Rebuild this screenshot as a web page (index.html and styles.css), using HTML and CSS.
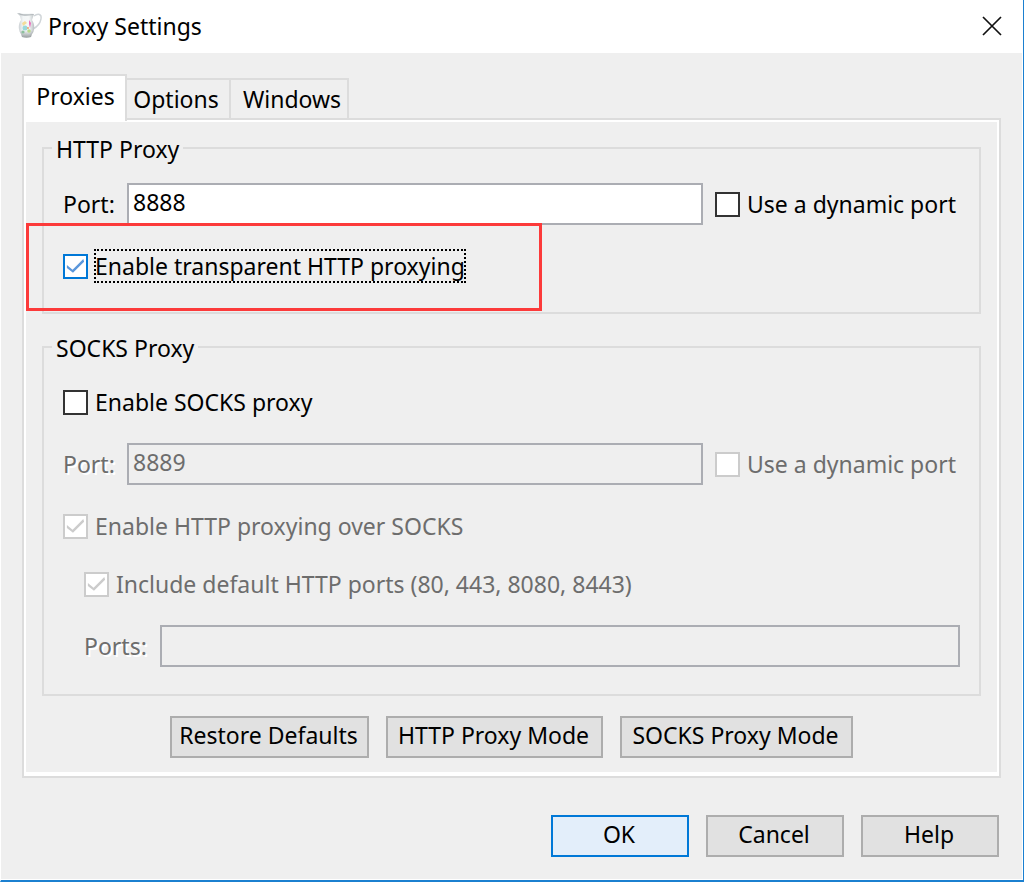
FILE: index.html
```html
<!DOCTYPE html>
<html lang="en">
<head>
<meta charset="utf-8">
<title>Proxy Settings</title>
<link rel="stylesheet" href="styles.css">
</head>
<body>
<div class="window">
  <header class="titlebar">
    <svg class="app-icon" width="28" height="30" viewBox="0 0 28 30" aria-hidden="true">
      <defs>
        <linearGradient id="glaze" x1="0" x2="1" y1="0" y2="0">
          <stop offset="0" stop-color="#bcc2c6"/>
          <stop offset="0.35" stop-color="#f3f6f7"/>
          <stop offset="0.7" stop-color="#f6f8f8"/>
          <stop offset="1" stop-color="#b9bfc2"/>
        </linearGradient>
        <linearGradient id="shade" x1="0" x2="0" y1="0" y2="1">
          <stop offset="0.7" stop-color="#7e8587" stop-opacity="0"/>
          <stop offset="1" stop-color="#7e8587" stop-opacity="0.8"/>
        </linearGradient>
      </defs>
      <path d="M18 5c4-3 8-2 7 3-1 5-4 8-8 10" fill="none" stroke="#d0d5d8" stroke-width="1.4"/>
      <path id="jug" d="M1 2c5 1 11 0 17 1l-2 6c3 4 3 11 0 14l-1 3c-3 1-6 1-9 0l-1-3C2 19 2 13 5 9L4 5z" fill="url(#glaze)"/>
      <path d="M1 2c5 1 11 0 17 1l-2 6c3 4 3 11 0 14l-1 3c-3 1-6 1-9 0l-1-3C2 19 2 13 5 9L4 5z" fill="url(#shade)"/>
      <path d="M2 2c5 2 11 1 16 1l-1 1C12 5 7 5 4 4z" fill="#b4babd"/>
      <path d="M6 12l3-2 2 2-4 3z" fill="#f3dc9a"/>
      <path d="M13 9l2 3-1 5-1-4z" fill="#ea6fbd"/>
      <circle cx="9" cy="17" r="2.5" fill="#9bd9dc"/>
      <circle cx="13" cy="20" r="1.8" fill="#b9d98a"/>
      <circle cx="7" cy="21" r="1.6" fill="#8cc09e"/>
      <circle cx="12" cy="17" r="0.9" fill="#ee9a62"/>
    </svg>
    <h1 class="title">Proxy Settings</h1>
    <button class="close" type="button" aria-label="Close">
      <svg width="20" height="20" viewBox="0 0 20 20" aria-hidden="true"><path d="M1 1l18 18M19 1L1 19" stroke="#111" stroke-width="1.7" fill="none"/></svg>
    </button>
  </header>

  <main class="content">
    <div class="tabs" role="tablist">
      <button class="tab tab-selected" type="button" role="tab" aria-selected="true">Proxies</button>
      <button class="tab tab-options" type="button" role="tab" aria-selected="false">Options</button>
      <button class="tab tab-windows" type="button" role="tab" aria-selected="false">Windows</button>
    </div>

    <form class="panel" id="settings">
      <fieldset class="group">
        <legend>HTTP Proxy</legend>
        <div class="row">
          <label class="field-label" for="http-port">Port:</label>
          <input class="field" id="http-port" type="text" value="8888">
          <label class="check dynamic"><input type="checkbox"><span>Use a dynamic port</span></label>
        </div>
        <div class="row highlighted">
          <label class="check"><input class="active" type="checkbox" checked><span class="focused">Enable transparent HTTP proxying</span></label>
          <div class="highlight"></div>
        </div>
      </fieldset>

      <fieldset class="group socks">
        <legend>SOCKS Proxy</legend>
        <div class="row">
          <label class="check"><input type="checkbox"><span>Enable SOCKS proxy</span></label>
        </div>
        <div class="row disabled">
          <label class="field-label" for="socks-port">Port:</label>
          <input class="field" id="socks-port" type="text" value="8889" disabled>
          <label class="check dynamic"><input type="checkbox" disabled><span>Use a dynamic port</span></label>
        </div>
        <div class="row disabled">
          <label class="check"><input type="checkbox" checked disabled><span>Enable HTTP proxying over SOCKS</span></label>
        </div>
        <div class="row disabled indented">
          <label class="check"><input type="checkbox" checked disabled><span>Include default HTTP ports (80, 443, 8080, 8443)</span></label>
        </div>
        <div class="row disabled indented">
          <label class="field-label wide" for="ports">Ports:</label>
          <input class="field" id="ports" type="text" disabled>
        </div>
      </fieldset>

      <div class="modes">
        <button class="button mode-restore" type="button">Restore Defaults</button>
        <button class="button mode-http" type="button">HTTP Proxy Mode</button>
        <button class="button mode-socks" type="button">SOCKS Proxy Mode</button>
      </div>
    </form>

    <footer class="actions">
      <button class="button action primary" type="submit" form="settings">OK</button>
      <button class="button action" type="button">Cancel</button>
      <button class="button action" type="button">Help</button>
    </footer>
  </main>
</div>
</body>
</html>
```
FILE: styles.css
```css
* {
  box-sizing: border-box;
}

body {
  margin: 0;
  background: #fff;
  color: #000;
  font: 23px/32px "Noto Sans", "Open Sans", sans-serif;
}

button,
input {
  margin: 0;
  color: inherit;
  font: inherit;
}

.window {
  display: flex;
  flex-direction: column;
  min-height: 100vh;
  border-left: 1px solid #fff;
  border-right: 1px solid #1b80d0;
  border-bottom: 2px solid #1b80d0;
}

.titlebar {
  display: flex;
  align-items: center;
  height: 53px;
  padding: 0 20px 2px 15px;
}

.app-icon {
  flex: none;
}

.title {
  flex: 1;
  margin: 0 0 0 4px;
  font-size: 23px;
  font-weight: 400;
}

.close {
  display: flex;
  padding: 1px;
  border: 0;
  background: none;
}

.content {
  flex: 1;
  margin: 0 1px 1px 0;
  padding: 21px 21px 20px;
  background: #efefef;
}

.tabs {
  display: flex;
  align-items: flex-end;
  height: 44px;
}

.tab {
  height: 40px;
  padding: 0;
  border: 2px solid #dcdcdc;
  border-left: 0;
  border-bottom: 0;
  background: #efefef;
}

.tab-selected {
  z-index: 1;
  width: 105px;
  height: 47px;
  margin-bottom: -3px;
  padding: 0 0 6px 2px;
  border-left: 2px solid #dcdcdc;
  background: #fff;
}

.tab-options {
  width: 104px;
  padding-right: 4px;
}

.tab-windows {
  width: 118px;
  padding-left: 6px;
}

.panel {
  padding: 11px 18px 18px;
  border: 2px solid #dcdcdc;
  box-shadow: inset 0 0 0 2px #fff, inset 0 -4px #fff;
}

.group {
  min-width: 0;
  margin: 0;
  padding: 18px 19px 29px;
  border: 2px solid #dcdcdc;
}

.socks {
  margin-top: 16px;
  padding: 21px 19px 27px;
}

legend {
  margin-left: -11px;
  padding: 2px 4px 0;
}

.row {
  display: flex;
  align-items: center;
  min-height: 34px;
}

.row + .row {
  margin-top: 24px;
}

.indented {
  padding-left: 21px;
}

.disabled {
  color: #6d6d6d;
}

.disabled .field-label {
  text-shadow: 2px 2px #fff;
}

.field-label {
  flex: none;
  width: 64px;
}

.wide {
  width: 76px;
}

.field {
  flex: 1;
  min-width: 0;
  height: 42px;
  padding: 0 4px 4px;
  border: 2px solid #abadb3;
  border-radius: 0;
  background: #fff;
}

.field:disabled {
  background: #efefef;
}

.check {
  display: flex;
  align-items: center;
  gap: 7px;
}

.dynamic {
  flex: none;
  width: 245px;
  margin-left: 12px;
}

.check input {
  display: grid;
  flex: none;
  width: 25px;
  height: 25px;
  border: 2px solid #333;
  background: #fff;
  appearance: none;
}

.check input:checked::before {
  content: "";
  background: #5b97db;
  clip-path: polygon(9% 45%, 36% 68%, 87% 17%, 91% 30%, 38% 82%, 9% 59%);
}

.check input.active {
  border-color: #0078d7;
}

.check input:disabled {
  border-color: #ccc;
}

.check input:disabled::before {
  background: #ccc;
}

.focused {
  outline: 2px dotted #000;
  outline-offset: -1px;
}

.highlighted {
  position: relative;
}

.highlight {
  position: absolute;
  top: -26px;
  left: -37px;
  width: 516px;
  height: 88px;
  border: 3px solid #fc3a3a;
  pointer-events: none;
}

.modes {
  display: flex;
  justify-content: center;
  gap: 17px;
  margin-top: 20px;
}

.button {
  height: 42px;
  padding: 0 2px 4px 0;
  border: 2px solid #adadad;
  background: #e1e1e1;
}

.mode-restore {
  width: 199px;
}

.mode-http {
  width: 217px;
}

.mode-socks {
  width: 233px;
}

.actions {
  display: flex;
  justify-content: flex-end;
  gap: 17px;
  margin: 37px 2px 0 0;
}

.action {
  width: 138px;
}

.primary {
  border-color: #0078d7;
  background: #e3eefa;
}
```
